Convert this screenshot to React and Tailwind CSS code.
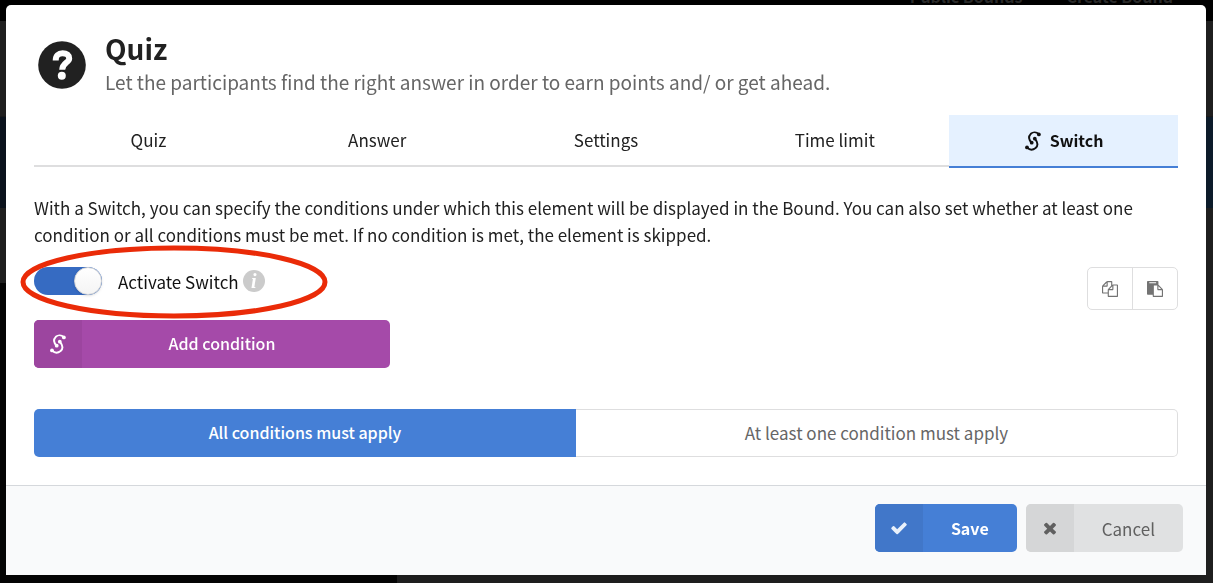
import React, { useState } from "react";

const tabs = ["Quiz", "Answer", "Settings", "Time limit", "Switch"];

const QuestionIcon = ({ className }) => (
  <svg viewBox="0 0 48 48" className={className} fill="none" aria-hidden="true">
    <circle cx="24" cy="24" r="23.8" fill="#212121" />
    <path
      d="M17.7 19.4C17.7 14.6 20.4 12.2 24.6 12.2C28.8 12.2 31.2 14.4 31.2 17.4C31.2 21.6 24.2 21.8 24.2 28.8"
      stroke="#fff"
      strokeWidth="6"
    />
    <circle cx="23.8" cy="34.8" r="4" fill="#fff" />
  </svg>
);

const SwitchIcon = ({ className }) => (
  <svg viewBox="0 0 18 20" className={className} fill="none" aria-hidden="true">
    <path
      d="M14.8 3.2C12.4 0.8 9 0.8 6.8 2.8C4.2 5.4 4.8 8.6 7.6 11.6"
      stroke="currentColor"
      strokeWidth="1.9"
      strokeLinecap="round"
    />
    <path
      d="M3.2 16.6C5.6 19 9 19 11.6 17C14.4 14.4 13.8 11.2 11 7.8"
      stroke="currentColor"
      strokeWidth="1.9"
      strokeLinecap="round"
    />
    <circle cx="14.9" cy="3.4" r="1.9" fill="currentColor" />
    <circle cx="3" cy="16.4" r="1.9" fill="currentColor" />
    <circle cx="7.7" cy="11.7" r="1.9" fill="currentColor" />
    <circle cx="10.8" cy="7.7" r="1.9" fill="currentColor" />
  </svg>
);

const Icon = ({ d, className }) => (
  <svg viewBox="0 0 1792 1792" className={className} fill="currentColor" aria-hidden="true">
    <path d={d} />
  </svg>
);

const checkPath =
  "M1671 566q0 40-28 68l-724 724-136 136q-28 28-68 28t-68-28l-136-136-362-362q-28-28-28-68t28-68l136-136q28-28 68-28t68 28l294 295 656-657q28-28 68-28t68 28l136 136q28 28 28 68z";
const timesPath =
  "M1490 1322q0 40-28 68l-136 136q-28 28-68 28t-68-28l-294-294-294 294q-28 28-68 28t-68-28l-136-136q-28-28-28-68t28-68l294-294-294-294q-28-28-28-68t28-68l136-136q28-28 68-28t68 28l294 294 294-294q28-28 68-28t68 28l136 136q28 28 28 68t-28 68l-294 294 294 294q28 28 28 68z";
const copyPath =
  "M1696 384q40 0 68 28t28 68v1216q0 40-28 68t-68 28h-960q-40 0-68-28t-28-68v-288h-544q-40 0-68-28t-28-68v-672q0-40 20-88t48-76l408-408q28-28 76-48t88-20h416q40 0 68 28t28 68v328q68-40 128-40h416zm-544 213l-299 299h299v-299zm-640-384l-299 299h299v-299zm196 647l316-316v-416h-384v416q0 40-28 68t-68 28h-416v640h512v-256q0-40 20-88t48-76zm956 804v-1152h-384v416q0 40-28 68t-68 28h-416v640h896z";
const pastePath =
  "M768 1664h896v-640h-416q-40 0-68-28t-28-68v-416h-384v1152zm256-1440v-64q0-13-9.5-22.5t-22.5-9.5h-704q-13 0-22.5 9.5t-9.5 22.5v64q0 13 9.5 22.5t22.5 9.5h704q13 0 22.5-9.5t9.5-22.5zm256 672h299l-299-299v299zm512 128v672q0 40-28 68t-68 28h-960q-40 0-68-28t-28-68v-160h-544q-40 0-68-28t-28-68v-1344q0-40 28-68t68-28h1088q40 0 68 28t28 68v328q21 13 36 28l408 408q28 28 48 76t20 88z";

// dimmed page that lies behind the dialog
const Backdrop = () => (
  <div className="fixed inset-0 flex flex-col bg-[#202020]" aria-hidden="true">
    <div className="h-[21px] overflow-hidden bg-black">
      <div className="-mt-[14px] flex justify-end gap-11 pr-10 text-[16px] leading-5 font-bold text-[#2a2a2a]">
        <span>Public Bounds</span>
        <span>Create Bound</span>
      </div>
    </div>
    <div className="h-24 border-b border-[#1a1a1a]" />
    <div className="h-[91px] bg-gradient-to-r from-[#0c131d] to-[#0d1c2b]" />
    <div className="h-[75px]" />
    <div className="w-[397px] flex-1 bg-[#050505]" />
  </div>
);

const App = () => {
  const [activeTab, setActiveTab] = useState("Switch");
  const [enabled, setEnabled] = useState(true);
  const [mode, setMode] = useState("all");

  const modeClass = (value) =>
    mode === value
      ? "bg-[#457fd6] text-[16px] font-medium text-white"
      : "border border-[#dededf] bg-white text-[#666]";

  return (
    <div className="min-h-screen font-['Noto_Sans_CJK_SC','Noto_Sans',sans-serif] text-[17px] leading-[27px] text-[#212121]">
      <Backdrop />

      <div
        role="dialog"
        aria-labelledby="dialog-title"
        className="relative mt-[5px] mr-[7px] mb-2 ml-[6px] overflow-hidden rounded-t-[5px] bg-white shadow-lg"
      >
        <div className="px-7 pt-[27px] pb-7">
          {/* Header */}
          <header className="flex items-center gap-[19px] pl-1">
            <QuestionIcon className="size-12 shrink-0" />
            <div>
              <h1 id="dialog-title" className="mb-0.5 text-[28px] leading-8 font-bold">
                Quiz
              </h1>
              <p className="text-[19px] leading-8 text-[#666]">
                Let the participants find the right answer in order to earn points and/ or get ahead.
              </p>
            </div>
          </header>

          {/* Tabs */}
          <div role="tablist" className="mt-[17px] flex h-[52px] border-b-2 border-[#dededf]">
            {tabs.map((tab) => (
              <button
                key={tab}
                role="tab"
                aria-selected={activeTab === tab}
                onClick={() => setActiveTab(tab)}
                className={`flex h-[53px] flex-1 basis-0 items-center justify-center gap-2 border-b-2 ${
                  activeTab === tab
                    ? "border-[#457fd6] bg-[#e5f1ff] text-[16px] font-bold text-[#111]"
                    : "border-transparent pb-0.5"
                }`}
              >
                {tab === "Switch" && <SwitchIcon className="h-5 w-[18px]" />}
                {tab}
              </button>
            ))}
          </div>

          <p className="mt-[27px]">
            With a Switch, you can specify the conditions under which this element will be displayed
            in the Bound. You can also set whether at least one condition or all conditions must be
            met. If no condition is met, the element is skipped.
          </p>

          <div className="mt-[19px] flex items-start justify-between">
            <div className="relative">
              <div className="flex h-7 items-center">
                <label className="flex cursor-pointer items-center gap-4 text-[#111]">
                  <input
                    type="checkbox"
                    role="switch"
                    checked={enabled}
                    onChange={(e) => setEnabled(e.target.checked)}
                    className="peer sr-only"
                  />
                  <span className="flex h-7 w-17 rounded-full bg-gray-200 peer-checked:justify-end peer-checked:bg-[#366bc2]">
                    <span className="size-7 rounded-full border border-[#d5d5d6] bg-gradient-to-b from-white to-[#f4f4f4] shadow-sm" />
                  </span>
                  Activate Switch
                </label>
                <button
                  aria-label="About switches"
                  className="ml-1 flex size-[22px] items-center justify-center rounded-full bg-[#cbcbcb] font-['Liberation_Serif',serif] text-[20px] leading-5 font-bold text-white italic"
                >
                  i
                </button>
              </div>
              {/* red marker around the toggle */}
              <svg
                viewBox="0 0 308 74"
                className="pointer-events-none absolute -top-[22px] -left-[14px] h-[74px] w-[308px]"
                aria-hidden="true"
              >
                <ellipse cx="154" cy="37" rx="151" ry="34" fill="none" stroke="#ea2b08" strokeWidth="5" />
              </svg>

              <button className="mt-[25px] flex h-12 w-[356px] overflow-hidden rounded-[5px] bg-[#a54aa9] text-[16px] font-medium text-white">
                <span className="flex h-12 w-12 items-center justify-center bg-[#9c459f]">
                  <SwitchIcon className="h-5 w-[18px]" />
                </span>
                <span className="flex h-12 flex-1 items-center justify-center pr-7 pb-0.5">
                  Add condition
                </span>
              </button>
            </div>

            <div className="flex h-[43px] divide-x divide-[#dededf] rounded-[5px] border border-[#dededf] text-[#737373]">
              <button aria-label="Copy" className="flex w-[45px] items-center justify-center">
                <Icon d={copyPath} className="size-4" />
              </button>
              <button aria-label="Paste" className="flex w-11 items-center justify-center">
                <Icon d={pastePath} className="size-4" />
              </button>
            </div>
          </div>

          <div className="mt-[41px] grid h-12 grid-cols-[9fr_10fr]">
            <button
              onClick={() => setMode("all")}
              className={`rounded-l-[5px] pb-0.5 ${modeClass("all")}`}
            >
              All conditions must apply
            </button>
            <button
              onClick={() => setMode("any")}
              className={`rounded-r-[5px] border-l-0 pb-0.5 ${modeClass("any")}`}
            >
              At least one condition must apply
            </button>
          </div>
        </div>

        {/* Footer */}
        <footer className="flex justify-end gap-[9px] border-t border-[#d5d8dc] bg-[#f9fafb] pt-[18px] pr-[23px] pb-[23px]">
          <button className="flex h-12 items-center overflow-hidden rounded-[5px] bg-[#457fd6] text-[16px] font-bold text-white">
            <span className="flex size-12 items-center justify-center bg-[#4177c9] text-[#e9f1fb]">
              <Icon d={checkPath} className="size-[18px]" />
            </span>
            <span className="px-7">Save</span>
          </button>
          <button className="flex h-12 items-center overflow-hidden rounded-[5px] bg-[#e0e1e2] text-[#606060]">
            <span className="flex size-12 items-center justify-center bg-[#d5d6d7]">
              <Icon d={timesPath} className="size-[18px]" />
            </span>
            <span className="px-7">Cancel</span>
          </button>
        </footer>
      </div>
    </div>
  );
};

export default App;
